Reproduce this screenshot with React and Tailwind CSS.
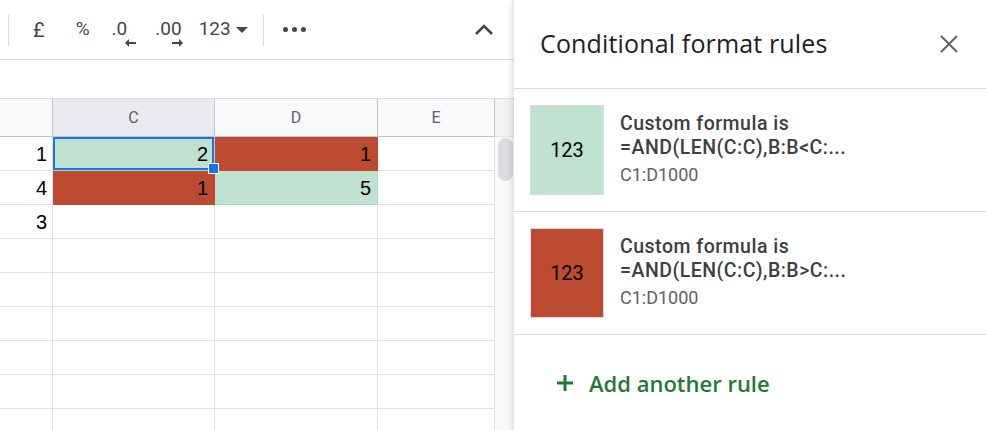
import React from "react";

const COLS = [
  { key: "C", w: "w-[162px]" },
  { key: "D", w: "w-[163px]" },
  { key: "E", w: "w-[117px]" },
];

const ROWS = [
  { n: "1", cells: [{ v: "2", bg: "green", sel: true }, { v: "1", bg: "red" }, {}] },
  { n: "4", cells: [{ v: "1", bg: "red" }, { v: "5", bg: "green" }, {}] },
  { n: "3", cells: [{}, {}, {}] },
  { n: "", cells: [{}, {}, {}] },
  { n: "", cells: [{}, {}, {}] },
  { n: "", cells: [{}, {}, {}] },
  { n: "", cells: [{}, {}, {}] },
  { n: "", cells: [{}, {}, {}] },
  { n: "", cells: [{}, {}, {}] },
];

const RULES = [
  { color: "bg-[#bfe1cf]", formula: "=AND(LEN(C:C),B:B<C:..." },
  { color: "bg-[#bd4b32]", formula: "=AND(LEN(C:C),B:B>C:..." },
];

function Toolbar() {
  return (
    <div className="h-[60px] shrink-0 border-b border-[#dadce0] flex items-center text-[#444746] text-[19px] font-['Roboto',sans-serif]">
      <div className="ml-[8px] w-px h-[32px] bg-[#dadce0]" />
      <span className="ml-[24px] text-[20px]">£</span>
      <span className="ml-[31px]">%</span>
      <span className="ml-[22px] relative">
        .0
        <svg className="absolute left-[13px] top-[24px]" width="12" height="8" viewBox="0 0 12 8">
          <path d="M11 4H3" stroke="#444746" strokeWidth="2" fill="none" />
          <path d="M0 4l4-4v8z" fill="#444746" />
        </svg>
      </span>
      <span className="ml-[28px] relative">
        .00
        <svg className="absolute left-[16px] top-[24px]" width="12" height="8" viewBox="0 0 12 8">
          <path d="M1 4h8" stroke="#444746" strokeWidth="2" fill="none" />
          <path d="M12 4L8 0v8z" fill="#444746" />
        </svg>
      </span>
      <span className="ml-[17px]">123</span>
      <svg className="ml-[5px]" width="12" height="6" viewBox="0 0 12 6">
        <path d="M0 0h12L6 6z" fill="#444746" />
      </svg>
      <div className="ml-[15px] w-px h-[32px] bg-[#dadce0]" />
      <div className="ml-[19px] flex gap-[4px]">
        <span className="w-[5px] h-[5px] rounded-full bg-[#444746]" />
        <span className="w-[5px] h-[5px] rounded-full bg-[#444746]" />
        <span className="w-[5px] h-[5px] rounded-full bg-[#444746]" />
      </div>
      <svg className="ml-auto mr-[20px]" width="20" height="12" viewBox="0 0 20 12">
        <path d="M2 10l8-8 8 8" stroke="#444746" strokeWidth="2.6" fill="none" />
      </svg>
    </div>
  );
}

function Cell({ w, cell }) {
  const bg =
    cell.bg === "green"
      ? "bg-[#bfe1cf] border-[#b2d6c3]"
      : cell.bg === "red"
      ? "bg-[#bd4b32] border-[#bd4b32]"
      : "bg-white border-[#e2e2e2]";
  return (
    <div
      className={`${w} ${bg} relative h-full border-r border-b flex items-center justify-end pr-[6px] text-[20px] text-black font-['Liberation_Sans',Arial,sans-serif]`}
    >
      {cell.v}
      {cell.sel && (
        <>
          <div className="absolute inset-0 border-2 border-[#1a73e8]" />
          <div className="absolute right-[-5px] bottom-[-4px] w-[11px] h-[11px] bg-[#1a73e8] border border-white z-10" />
        </>
      )}
    </div>
  );
}

function Sheet() {
  return (
    <div className="w-[514px] shrink-0 flex flex-col h-[430px] overflow-hidden">
      <Toolbar />
      <div className="h-[39px] shrink-0 border-b border-[#dadce0]" />
      <div className="flex shrink-0">
        <div className="flex flex-col">
          <div className="flex h-[38px] shrink-0 border-b border-[#c4c7c5] text-[16px] text-[#5f6368] font-['Roboto',sans-serif]">
            <div className="w-[53px] h-full bg-[#f8f9fa] border-r border-[#c4c7c5]" />
            {COLS.map((c) => (
              <div
                key={c.key}
                className={`${c.w} h-full border-r border-[#c4c7c5] flex items-center justify-center ${
                  c.key === "C" ? "bg-[#e8eaed]" : "bg-[#f8f9fa]"
                }`}
              >
                {c.key}
              </div>
            ))}
          </div>
          {ROWS.map((r, i) => (
            <div key={i} className="flex h-[34px] shrink-0">
              <div className="w-[53px] h-full border-r border-b border-[#e2e2e2] flex items-center justify-end pr-[5px] text-[20px] text-black font-['Liberation_Sans',Arial,sans-serif]">
                {r.n}
              </div>
              {COLS.map((c, j) => (
                <Cell key={c.key} w={c.w} cell={r.cells[j]} />
              ))}
            </div>
          ))}
        </div>
        <div className="w-[19px] flex flex-col bg-[#fafafa]">
          <div className="h-[38px] bg-[#f1f3f4] border-b border-[#e2e2e2]" />
          <div className="mt-[1px] ml-[3px] w-[15px] h-[43px] rounded-full bg-[#dadce0]" />
        </div>
      </div>
    </div>
  );
}

function Panel() {
  return (
    <div className="flex-1 bg-white flex flex-col shadow-[-2px_0_6px_rgba(60,64,67,0.18)] z-20">
      <div className="h-[89px] shrink-0 border-b border-[#dadce0] flex items-center pl-[26px] pr-[27px]">
        <h1 className="text-[25px] font-medium text-[#202124] font-['Open_Sans',sans-serif] tracking-[0.15px]">
          Conditional format rules
        </h1>
        <svg className="ml-auto" width="20" height="20" viewBox="0 0 20 20">
          <path d="M2 2l16 16M18 2L2 18" stroke="#5f6368" strokeWidth="2" />
        </svg>
      </div>
      {RULES.map((r, i) => (
        <div key={i} className="h-[123px] shrink-0 border-b border-[#dadce0] flex items-center pl-[16px]">
          <div
            className={`${r.color} w-[74px] h-[90px] border border-[#dadce0] flex items-center justify-center text-[20px] text-black font-['Roboto',sans-serif]`}
          >
            123
          </div>
          <div className="ml-[16px] flex flex-col font-['Roboto',sans-serif] mt-[-2px]">
            <span className="text-[19.5px] leading-[24px] font-medium text-[#3c4043] tracking-[0.5px]">Custom formula is</span>
            <span className="text-[19.5px] leading-[24px] font-medium text-[#3c4043] tracking-[0.5px]">{r.formula}</span>
            <span className="text-[18px] leading-[24px] mt-[3px] text-[#5f6368]">C1:D1000</span>
          </div>
        </div>
      ))}
      <div className="h-[96px] shrink-0 flex items-center pl-[42px] text-[#1e7b34]">
        <svg width="18" height="18" viewBox="0 0 18 18">
          <path d="M9 1v16M1 9h16" stroke="#1e7b34" strokeWidth="3" />
        </svg>
        <span className="ml-[15px] text-[22px] font-semibold font-['Open_Sans',sans-serif]">Add another rule</span>
      </div>
    </div>
  );
}

export default function App() {
  return (
    <div className="w-[986px] h-[430px] overflow-hidden bg-white flex">
      <Sheet />
      <Panel />
    </div>
  );
}
